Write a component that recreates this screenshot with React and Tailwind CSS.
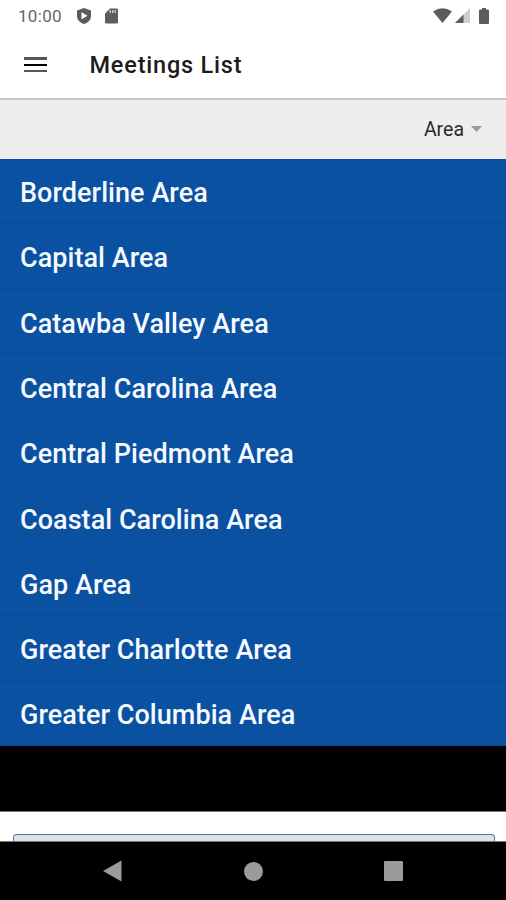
const areas = [
  'Borderline Area',
  'Capital Area',
  'Catawba Valley Area',
  'Central Carolina Area',
  'Central Piedmont Area',
  'Coastal Carolina Area',
  'Gap Area',
  'Greater Charlotte Area',
  'Greater Columbia Area',
]

function StatusBar() {
  return (
    <div className="flex h-[31px] shrink-0 items-center justify-between pl-[18px] pr-[17px] text-[#666]">
      <div className="flex items-center">
        <span className="w-[59px] pt-px text-[17px] leading-[31px] tracking-[0.3px]">10:00</span>
        <svg className="h-4 w-[14px]" viewBox="0 0 14 16">
          <path fill="#5c5c5c" d="M7 0 14 2.5V8c0 3.8-3 6.8-7 8-4-1.200-7-4.200-7-8V2.500z" />
          <path fill="#fff" d="M4.500 4.200v7l6-3.500z" />
        </svg>
        <svg className="ml-[14px] h-4 w-[13px]" viewBox="0 0 13 16">
          <path fill="#5c5c5c" d="M5 0.500h6.500Q13 .5 13 2v12q0 1.500-1.500 1.500h-10Q0 15.500 0 14V5.500z" />
          <path stroke="#ddd" strokeWidth="1.200" d="M5.200 2v3M7.700 2v3M10.200 2v3" />
        </svg>
      </div>
      <div className="flex items-center">
        <svg className="h-4 w-[19px]" viewBox="0 0 19 16">
          <path fill="#5c5c5c" d="M0 3.500Q9.500-3 19 3.500L9.500 15z" />
        </svg>
        <svg className="ml-[3px] h-4 w-[15px]" viewBox="0 0 15 16">
          <path fill="#cfcfcf" d="M15 0v15H0z" />
          <path fill="#5c5c5c" d="M8.500 6.500V15H0z" />
        </svg>
        <svg className="ml-[9px] h-4 w-[10px]" viewBox="0 0 10 16">
          <path fill="#5c5c5c" d="M3 0h4v1.500h2q1 0 1 1V15q0 1-1 1H1q-1 0-1-1V2.500q0-1 1-1h2z" />
        </svg>
      </div>
    </div>
  )
}

function Header() {
  return (
    <header className="flex h-[67px] shrink-0 items-center pl-[23.500px]">
      <div className="flex w-[66px] flex-col gap-1">
        <span className="h-[2.500px] w-[23px] bg-[#555]"></span>
        <span className="h-[2px] w-[23px] bg-black"></span>
        <span className="h-[2.500px] w-[23px] bg-[#555]"></span>
      </div>
      <h1 className="pt-[2px] text-[23.500px] font-medium tracking-[0.800px] text-[#1c1c1c]">Meetings List</h1>
    </header>
  )
}

function AreaRow({ name }) {
  return (
    <li className="flex flex-1 items-center border-b border-[#094a92] pl-5 pt-[6px] text-[27px] font-medium leading-none tracking-[0.050px] text-[#f6f9ff]">
      {name}
    </li>
  )
}

function NavBar() {
  return (
    <nav className="flex h-[58px] shrink-0 items-center justify-between bg-black pl-[103px] pr-[103px]">
      <svg className="h-[22px] w-[19px]" viewBox="0 0 19 22">
        <path fill="#9b9b9b" d="M18.500 .5v21L0 11z" />
      </svg>
      <span className="h-[19px] w-[19px] rounded-full bg-[#9b9b9b]"></span>
      <span className="h-[20px] w-[19px] rounded-[1px] bg-[#9b9b9b]"></span>
    </nav>
  )
}

function App() {
  return (
    <div className="flex h-[900px] w-[506px] flex-col overflow-hidden bg-white font-['Roboto',sans-serif]">
      <StatusBar />
      <Header />
      <div className="flex h-[60.500px] shrink-0 items-center justify-end border-t-2 border-[#c4c4c4] bg-[#eeeeee] pr-[24px]">
        <span className="text-[19.500px] text-[#2a2a2a]">Area</span>
        <svg className="ml-[7px] h-[6px] w-[11px]" viewBox="0 0 11 6">
          <path fill="#9b9b9b" d="M0 0h11L5.500 6z" />
        </svg>
      </div>
      <ul className="flex h-[587.500px] shrink-0 flex-col bg-[#0a51a1]">
        {areas.map((name) => (
          <AreaRow key={name} name={name} />
        ))}
      </ul>
      <div className="h-[65px] shrink-0 bg-black"></div>
      <div className="flex flex-1 flex-col overflow-hidden border-y border-[#777] bg-white pl-[13px] pr-[11px] pt-[22px]">
        <div className="flex-1 rounded-t-[4px] border border-b-0 border-[#5874a8] bg-[#dfe1e6]"></div>
      </div>
      <NavBar />
    </div>
  )
}

export default App
